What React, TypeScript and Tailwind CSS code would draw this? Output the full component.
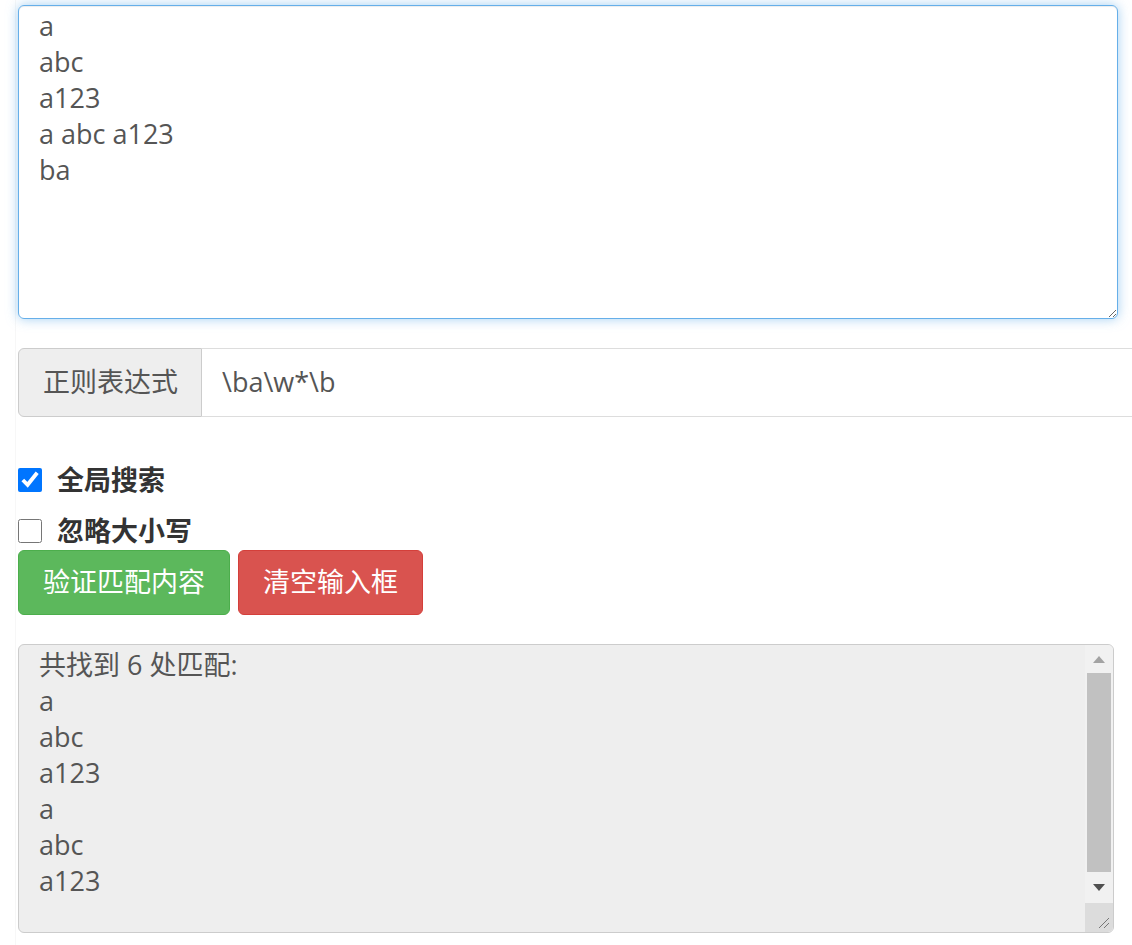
import React, { useState } from "react";

const FONT = "font-['Open_Sans','Noto_Sans_CJK_SC',sans-serif]";

const matches = ["a", "abc", "a123", "a", "abc", "a123"];

export default function App() {
  const [text, setText] = useState("a\nabc\na123\na abc a123\nba");
  const [pattern, setPattern] = useState("\\ba\\w*\\b");
  const [globalSearch, setGlobalSearch] = useState(true);
  const [ignoreCase, setIgnoreCase] = useState(false);

  return (
    <div className={`h-[945px] w-[1132px] overflow-hidden bg-white ${FONT}`}>
      <div className="ml-[15px] h-full border-l border-[#f7f7f7] pl-[2px] pt-[5px]">
        {/* Source text */}
        <textarea
          value={text}
          onChange={(e) => setText(e.target.value)}
          className="block h-[314px] w-[1100px] rounded-[6px] border border-[#66afe9] px-[20px] pt-[2px] text-[27px] leading-[36px] text-[#555] shadow-[inset_0_1px_1px_rgba(0,0,0,0.075),0_0_12px_rgba(102,175,233,0.6)] outline-none"
        />

        {/* Regex input group */}
        <div className="mt-[29px] flex h-[69px] w-[1140px]">
          <span className="flex w-[184px] items-center rounded-l-[6px] border border-[#ccc] bg-[#eee] pl-[24px] text-[27px] text-[#555]">
            正则表达式
          </span>
          <input
            value={pattern}
            onChange={(e) => setPattern(e.target.value)}
            className="flex-1 border border-l-0 border-[#ddd] pl-[20px] text-[27px] text-[#555] outline-none"
          />
        </div>

        {/* Options */}
        <label className="mt-[45px] flex h-[36px] items-center gap-[15px] text-[27px] font-bold text-[#333]">
          <input
            type="checkbox"
            checked={globalSearch}
            onChange={(e) => setGlobalSearch(e.target.checked)}
            className="m-0 h-[24px] w-[24px]"
          />
          全局搜索
        </label>
        <label className="mt-[15px] flex h-[36px] items-center gap-[15px] text-[27px] font-bold text-[#333]">
          <input
            type="checkbox"
            checked={ignoreCase}
            onChange={(e) => setIgnoreCase(e.target.checked)}
            className="m-0 h-[24px] w-[24px]"
          />
          忽略大小写
        </label>

        {/* Actions */}
        <div className="mt-px flex gap-[8px]">
          <button className="h-[65px] rounded-[6px] border border-[#4cae4c] bg-[#5cb85c] px-[24px] text-[27px] text-white">
            验证匹配内容
          </button>
          <button
            onClick={() => setText("")}
            className="h-[65px] rounded-[6px] border border-[#d43f3a] bg-[#d9534f] px-[24px] text-[27px] text-white"
          >
            清空输入框
          </button>
        </div>

        {/* Result */}
        <div className="mt-[29px] flex h-[289px] w-[1096px] overflow-hidden rounded-[6px] border border-[#ccc] bg-[#eee]">
          <div className="flex-1 px-[20px] pt-[2px] text-[27px] leading-[36px] text-[#555]">
            <div>共找到 {matches.length} 处匹配:</div>
            {matches.map((m, i) => (
              <div key={i}>{m}</div>
            ))}
          </div>
          <div className="flex w-[28px] flex-col bg-[#f1f1f1]">
            <div className="flex h-[28px] items-center justify-center">
              <svg width="12" height="7" viewBox="0 0 12 7">
                <path d="M0 7 L6 0 L12 7 Z" fill="#a3a3a3" />
              </svg>
            </div>
            <div className="mx-[2px] flex-1 bg-[#c1c1c1]" />
            <div className="flex h-[31px] items-center justify-center">
              <svg width="12" height="7" viewBox="0 0 12 7">
                <path d="M0 0 L12 0 L6 7 Z" fill="#505050" />
              </svg>
            </div>
            <div className="flex h-[29px] items-end justify-end bg-[#dcdcdc] p-[3px]">
              <svg width="14" height="14" viewBox="0 0 14 14">
                <path d="M13 3 L3 13 M13 8 L8 13" stroke="#777" strokeWidth="1" />
              </svg>
            </div>
          </div>
        </div>
      </div>
    </div>
  );
}
